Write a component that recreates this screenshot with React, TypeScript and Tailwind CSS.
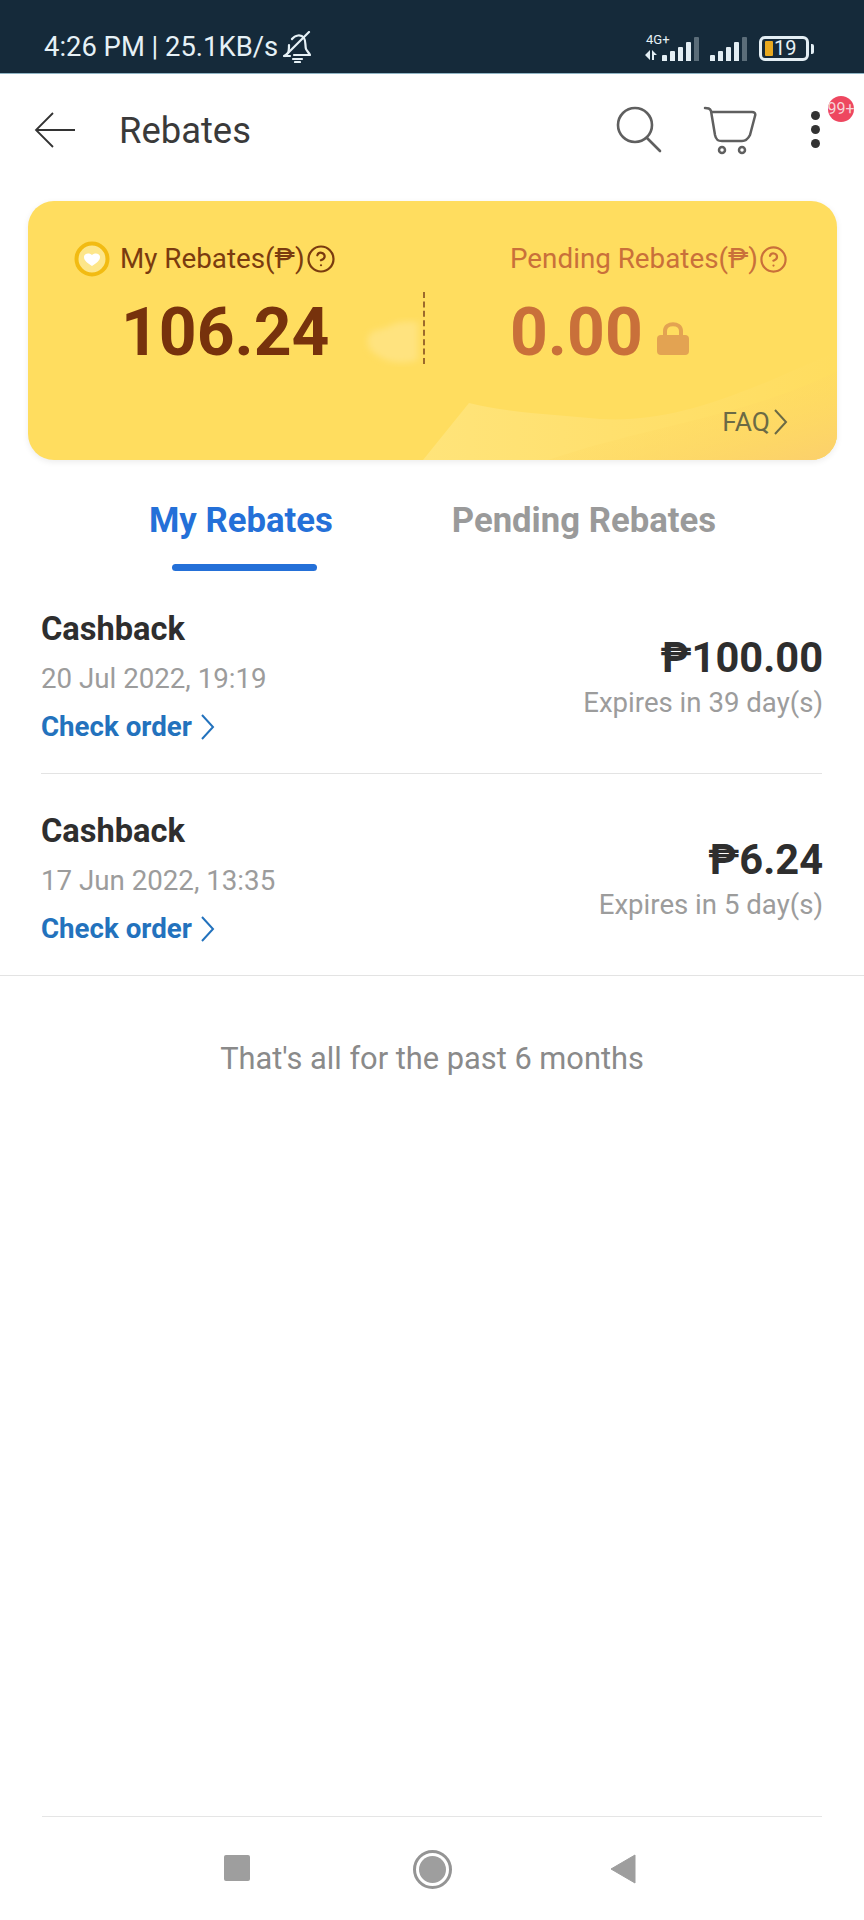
import { CircleHelp } from 'lucide-react';

function BellOff() {
  return (
    <svg width="28" height="32" viewBox="0 0 28 32" fill="none" stroke="#e6f1f6" strokeWidth="2.2" strokeLinecap="round" strokeLinejoin="round">
      <path d="M9 8c3-4 9-5 12-1 2 3 1 8 2 11 1 2 3 4 4 6H11" />
      <path d="M6 14c0 3 0 6-1 8-1 1-2 2-4 3h6" />
      <path d="M2 25 26 1" />
      <path d="M10 28h9M12 31h5" />
    </svg>
  );
}

function Signal({ arrows }: { arrows?: boolean }) {
  const bars = [6, 10, 14, 19, 24];
  return (
    <div className="flex items-end gap-[3px] h-[25px]">
      {arrows && (
        <svg width="12" height="12" viewBox="0 0 12 12" className="mr-[2px]" fill="#e3eef4">
          <path d="M5 1v10L0 6zM7 1l5 5H9v5H7z" />
        </svg>
      )}
      {bars.map((h, i) => (
        <div
          key={i}
          className={`w-[5px] rounded-t-[1px] ${i === 4 ? 'bg-[#5b6d79]' : 'bg-[#e3eef4]'}`}
          style={{ height: h }}
        />
      ))}
    </div>
  );
}

function StatusBar() {
  return (
    <div className="h-[74px] bg-[#152a3a] border-b border-[#8fb4c4] flex items-end justify-between pl-[44px] pr-[50px] pb-[9px] text-[#e6f1f6]">
      <div className="flex items-center gap-[5px]">
        <span className="text-[27.4px] leading-[34px]">4:26 PM | 25.1KB/s</span>
        <BellOff />
      </div>
      <div className="flex items-end gap-[11px] mb-[3px]">
        <div className="relative">
          <div className="absolute left-[1px] top-[-2px] text-[13px] leading-[12px]">4G+</div>
          <Signal arrows />
        </div>
        <Signal />
        <div className="flex items-center gap-[2px] ml-[1px]">
          <div className="w-[50px] h-[25px] rounded-[6px] border-[3px] border-[#e3eef4] flex items-center pl-[3px] gap-[1px]">
            <div className="w-[8px] h-[15px] bg-[#e8a91f] rounded-[1px]" />
            <span className="text-[20px] leading-[19px]">19</span>
          </div>
          <div className="w-[3px] h-[10px] bg-[#e3eef4] rounded-r-[2px]" />
        </div>
      </div>
    </div>
  );
}

function Cart() {
  return (
    <svg width="54" height="50" viewBox="0 0 54 50" fill="none" stroke="#5f5f5f" strokeWidth="2.5" strokeLinecap="round" strokeLinejoin="round">
      <path d="M2 3c3 0 5 0 6 3l4 24c1 5 3 6 7 6h20c4 0 6-2 8-6l5-19c1-3-1-4-3-4H9" />
      <circle cx="19" cy="45" r="3" />
      <circle cx="39" cy="45" r="3" />
    </svg>
  );
}

function Header() {
  return (
    <div className="h-[127px] flex items-center pl-[34px] pr-[26px] pb-[16px]">
      <svg width="42" height="36" viewBox="0 0 42 36" fill="none" stroke="#333" strokeWidth="1.8" className="mr-[43px] shrink-0">
        <path d="M41 18H2M19 1 2 18l17 17" />
      </svg>
      <span className="text-[36.4px] leading-[40px] text-[#3a3a3a] flex-1 mt-[2px]">Rebates</span>
      <svg width="46" height="48" viewBox="0 0 46 48" fill="none" stroke="#5f5f5f" strokeWidth="2.6" strokeLinecap="round" className="mr-[41px]">
        <circle cx="19" cy="19" r="17" />
        <path d="M31 32l13 13" />
      </svg>
      <div className="mr-[54px]"><Cart /></div>
      <div className="relative flex flex-col gap-[5px] mr-[18px]">
        <div className="w-[9px] h-[9px] rounded-full bg-[#333]" />
        <div className="w-[9px] h-[9px] rounded-full bg-[#333]" />
        <div className="w-[9px] h-[9px] rounded-full bg-[#333]" />
        <div className="absolute left-[17px] top-[-15px] w-[26px] h-[26px] rounded-full bg-[#ee4760] text-[#f6d5d9] text-[16px] leading-[26px] flex justify-center overflow-hidden whitespace-nowrap">99+</div>
      </div>
    </div>
  );
}

function Coin() {
  return (
    <svg width="36" height="36" viewBox="0 0 36 36" className="shrink-0">
      <circle cx="18" cy="18" r="15.5" fill="#fde68a" stroke="#f2bb12" strokeWidth="4" />
      <path d="M18 25c-4-3-8-5-8-9 0-3 4-5 8-2 4-3 8-1 8 2 0 4-4 6-8 9z" fill="#fff" />
    </svg>
  );
}

function LockIcon() {
  return (
    <svg width="32" height="34" viewBox="0 0 32 34" className="ml-[14px] mt-[10px]">
      <path d="M8 16V10c0-9 16-9 16 0v6" fill="none" stroke="#e3a352" strokeWidth="4" />
      <rect x="0" y="14" width="32" height="20" rx="4" fill="#e3a352" />
    </svg>
  );
}

function RebateCard() {
  return (
    <div className="relative ml-[28px] mr-[27px] h-[259px] rounded-[26px] bg-[#ffdd5f] shadow-[0_2px_6px_rgba(0,0,0,0.08)] overflow-hidden">
      <svg className="absolute inset-0" width="810" height="259" viewBox="0 0 810 259" fill="none">
        <defs>
          <linearGradient id="hill" x1="0" y1="0" x2="1" y2="0">
            <stop offset="0" stopColor="#ffe47a" />
            <stop offset="0.45" stopColor="#ffe06e" />
            <stop offset="1" stopColor="#ffdd5f" />
          </linearGradient>
          <linearGradient id="corner" x1="0" y1="0" x2="1" y2="1">
            <stop offset="0.3" stopColor="#ffdd5f" stopOpacity="0" />
            <stop offset="1" stopColor="#fbcf6c" />
          </linearGradient>
          <filter id="soft"><feGaussianBlur stdDeviation="3" /></filter>
        </defs>
        <path d="M395 259 L441 202 C 480 212, 530 214, 572 218 C 640 222, 700 200, 809 150 V259 Z" fill="url(#hill)" />
        <path d="M520 259 C 620 225, 720 215, 809 170 V259 Z" fill="url(#corner)" />
        <path d="M342 148c-5-8-2-18 8-19 6-1 10-3 16-6 8-3 16-2 24-2v38c-18 6-36 2-48-11z" fill="#ffe37f" filter="url(#soft)" />
      </svg>
      <div className="relative h-full flex">
        <div className="w-[395px] pl-[46px] pt-[40px]">
          <div className="flex items-center h-[36px] text-[#7a3b0f] text-[27.8px] leading-[36px]">
            <Coin />
            <span className="ml-[10px]">My Rebates(₱)</span>
            <CircleHelp size={30} strokeWidth={2.2} absoluteStrokeWidth className="ml-[1px]" />
          </div>
          <div className="ml-[47px] mt-[24px] text-[66px] leading-[64px] font-bold text-[#77320c]">106.24</div>
        </div>
        <div className="h-[72px] mt-[91px] border-l-2 border-dashed border-[#9c6a2c]" />
        <div className="flex-1 pl-[85px] pt-[40px] text-[#c9703a]">
          <div className="flex items-center h-[36px] text-[27.8px] leading-[36px]">
            <span>Pending Rebates(₱)</span>
            <CircleHelp size={29} strokeWidth={2.2} absoluteStrokeWidth className="ml-[1px]" />
          </div>
          <div className="flex items-center mt-[24px]">
            <span className="text-[66px] leading-[64px] font-bold">0.00</span>
            <LockIcon />
          </div>
        </div>
      </div>
      <div className="absolute right-[49px] bottom-[22px] flex items-center text-[#6b6a45] text-[26.4px] leading-[32px]">
        FAQ
        <svg width="14" height="26" viewBox="0 0 14 26" fill="none" stroke="#6b6a45" strokeWidth="2" className="ml-[4px]">
          <path d="M1 1l11 12L1 25" />
        </svg>
      </div>
    </div>
  );
}

function Tabs() {
  return (
    <div className="h-[112px] flex text-[34.7px] leading-[40px] font-bold pt-[40px]">
      <div className="ml-[149px] flex flex-col items-start">
        <span className="text-[#2470d8]">My Rebates</span>
        <div className="w-[145px] h-[7px] rounded-full bg-[#2470d8] mt-[24px] ml-[23px]" />
      </div>
      <span className="ml-[119px] text-[#9a9a9a]">Pending Rebates</span>
    </div>
  );
}

interface RowProps {
  date: string;
  amount: string;
  expires: string;
  fullLine?: boolean;
}

function Row({ date, amount, expires, fullLine }: RowProps) {
  return (
    <div className={`border-b border-[#e3e3e3] ${fullLine ? 'pl-[41px] pr-[42px]' : 'ml-[41px] mr-[42px]'} h-[202px] pt-[39px] flex justify-between`}>
      <div>
        <div className="text-[32.6px] leading-[36px] font-bold text-[#2e2e2e]">Cashback</div>
        <div className="text-[27.7px] leading-[34px] text-[#9c9c9c] mt-[15px]">{date}</div>
        <div className="flex items-center text-[27.7px] leading-[34px] font-bold text-[#2372bd] mt-[14px]">
          Check order
          <svg width="14" height="26" viewBox="0 0 14 26" fill="none" stroke="#2372bd" strokeWidth="2" className="ml-[9px]">
            <path d="M1 1l11 12L1 25" />
          </svg>
        </div>
      </div>
      <div className="text-right pt-[25px] -mr-[1px]">
        <div className="text-[41.6px] leading-[44px] font-bold text-[#2e2e2e]">{amount}</div>
        <div className="text-[27.6px] leading-[34px] text-[#9c9c9c] mt-[6px]">{expires}</div>
      </div>
    </div>
  );
}

function NavBar() {
  return (
    <div className="mt-auto">
      <div className="mx-[42px] border-t border-[#e5e5e5]" />
      <div className="h-[103px] flex items-start pt-[33px] pl-[224px]">
        <div className="w-[26px] h-[26px] mt-[5px] rounded-[2px] bg-[#9e9e9e]" />
        <div className="ml-[163px] w-[39px] h-[39px] rounded-full border-[3px] border-[#949494] flex items-center justify-center">
          <div className="w-[27px] h-[27px] rounded-full bg-[#9e9e9e]" />
        </div>
        <svg width="26" height="30" viewBox="0 0 26 30" className="ml-[158px] mt-[4px]">
          <path d="M1 15 25 1v28z" fill="#9e9e9e" stroke="#9e9e9e" strokeLinejoin="round" />
        </svg>
      </div>
    </div>
  );
}

export default function App() {
  return (
    <div className="w-[864px] h-[1920px] bg-white flex flex-col font-['Roboto',sans-serif]">
      <StatusBar />
      <Header />
      <RebateCard />
      <Tabs />
      <Row date="20 Jul 2022, 19:19" amount="₱100.00" expires="Expires in 39 day(s)" />
      <Row date="17 Jun 2022, 13:35" amount="₱6.24" expires="Expires in 5 day(s)" fullLine />
      <div className="text-center text-[30.8px] leading-[36px] text-[#8a8a8a] mt-[65px]">That's all for the past 6 months</div>
      <NavBar />
    </div>
  );
}
